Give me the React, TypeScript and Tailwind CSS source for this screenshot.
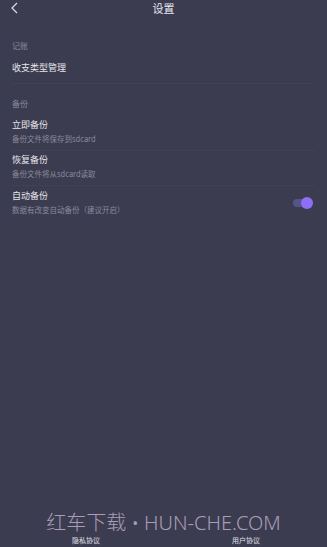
import React, { useState } from 'react';

const font = { fontFamily: '"Noto Sans CJK SC", "Noto Sans", sans-serif' };
const markFont = { fontFamily: '"Noto Sans", "Noto Sans CJK SC", sans-serif' };

const Item: React.FC<{ title: string; sub?: string; right?: React.ReactNode; className?: string }> = ({ title, sub, right, className }) => (
  <div className={`mx-3 flex items-center ${className ?? ''}`}>
    <div className="flex-1">
      <div className="text-[9px] leading-[12px] text-[#e6e6ee]">{title}</div>
      {sub && <div className="mt-[3px] text-[7.5px] leading-[10px] text-[#8a8a9c]">{sub}</div>}
    </div>
    {right}
  </div>
);

const Toggle: React.FC<{ on: boolean; onClick: () => void }> = ({ on, onClick }) => (
  <button onClick={onClick} className="relative mr-[4px] h-[8px] w-[18px] rounded-full bg-[#55558a]">
    <span
      className={`absolute top-1/2 h-[12px] w-[12px] -translate-y-1/2 rounded-full bg-[#8f6ff5] ${on ? 'right-[-2px]' : 'left-[-2px]'}`}
    />
  </button>
);

export default function App() {
  const [auto, setAuto] = useState(true);

  return (
    <div className="flex h-[547px] w-[327px] flex-col bg-[#3c3c50]" style={font}>
      {/* Header */}
      <div className="relative flex h-[17px] items-center justify-center">
        <svg className="absolute left-[10px] top-[2px]" width="9" height="12" viewBox="0 0 9 12" fill="none">
          <path d="M7 1L2 6l5 5" stroke="#d8d8e2" strokeWidth="1.3" />
        </svg>
        <span className="text-[11px] text-[#e8e8f0]">设置</span>
      </div>

      {/* 记账 */}
      <div className="mx-3 mt-[24px] text-[8px] leading-[10px] text-[#8a8a9c]">记账</div>
      <Item title="收支类型管理" className="mt-[11px] border-b border-[#414155] pb-[9px]" />

      {/* 备份 */}
      <div className="mx-3 mt-[15px] text-[8px] leading-[10px] text-[#8a8a9c]">备份</div>
      <Item
        title="立即备份"
        sub="备份文件将保存到sdcard"
        className="mt-[10px] border-b border-[#414155] pb-[6px]"
      />
      <Item
        title="恢复备份"
        sub="备份文件将从sdcard读取"
        className="border-b border-[#414155] pt-[3px] pb-[6px]"
      />
      <Item
        title="自动备份"
        sub="数据有改变自动备份（建议开启）"
        className="pt-[4px]"
        right={<Toggle on={auto} onClick={() => setAuto(!auto)} />}
      />

      <div className="flex-1" />

      {/* Footer */}
      <div
        className="mb-[3px] text-center text-[20px] font-light leading-[20px] text-[#a99cb8]"
        style={markFont}
      >
        红车下载 • HUN-CHE.COM
      </div>
      <div className="flex h-[11px] items-start text-[7px] leading-[9px] text-[#e0e0ea]">
        <span className="w-[172px] text-center">隐私协议</span>
        <span className="w-[148px] text-center">用户协议</span>
      </div>
    </div>
  );
}
